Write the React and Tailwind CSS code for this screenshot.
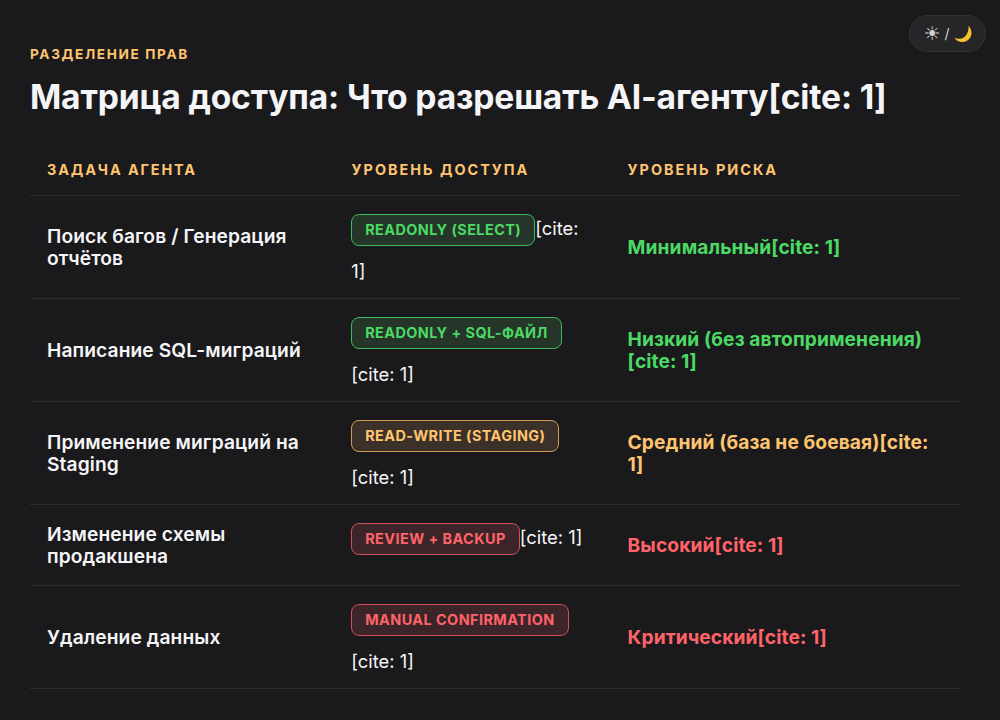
import React from 'react';

const rows = [
  {
    task: 'Поиск багов / Генерация отчётов',
    badge: 'READONLY (SELECT)',
    badgeClass: 'bg-[#25352a] border-[#3fb95c] text-[#4cd964]',
    risk: 'Минимальный[cite: 1]',
    riskClass: 'text-[#4cd964]',
  },
  {
    task: 'Написание SQL-миграций',
    badge: 'READONLY + SQL-ФАЙЛ',
    badgeClass: 'bg-[#25352a] border-[#3fb95c] text-[#4cd964]',
    risk: 'Низкий (без автоприменения)[cite: 1]',
    riskClass: 'text-[#4cd964]',
  },
  {
    task: 'Применение миграций на Staging',
    badge: 'READ-WRITE (STAGING)',
    badgeClass: 'bg-[#3b3128] border-[#cf9c58] text-[#ffc46f]',
    risk: 'Средний (база не боевая)[cite: 1]',
    riskClass: 'text-[#ffc46f]',
  },
  {
    task: 'Изменение схемы продакшена',
    badge: 'REVIEW + BACKUP',
    badgeClass: 'bg-[#3c2529] border-[#cf5157] text-[#ff6369]',
    risk: 'Высокий[cite: 1]',
    riskClass: 'text-[#ff6369]',
  },
  {
    task: 'Удаление данных',
    badge: 'MANUAL CONFIRMATION',
    badgeClass: 'bg-[#3c2529] border-[#cf5157] text-[#ff6369]',
    risk: 'Критический[cite: 1]',
    riskClass: 'text-[#ff6369]',
  },
];

const App = () => {
  return (
    <div className="min-h-[720px] bg-[#1a1a1c] px-[30px] pt-[46px] text-[#f5f5f7] font-['Inter',sans-serif] relative">
      {/* Theme toggle */}
      <button className="absolute top-[15px] right-[14px] w-[77px] h-[37px] flex items-center justify-center gap-[4px] rounded-full border border-[#333336] bg-[#262628] text-[14px] text-[#d0d0d2]">
        <span className="font-['DejaVu_Sans',sans-serif] text-[19px] leading-none">☀</span>
        <span>/</span>
        <svg className="w-[18px] h-[18px]" viewBox="0 0 18 18">
          <path d="M14.5 0.5 C18.5 5 18.5 11.5 14 15 C9.5 18.5 3.5 17.5 0.5 13 C4.5 14.5 9 14 11.5 11 C14 8 15 4 14.5 0.5 Z" fill="#f5c22e" />
        </svg>
      </button>

      <div className="text-[13.6px] leading-[17px] font-bold tracking-[1.65px] text-[#ffc46f]">РАЗДЕЛЕНИЕ ПРАВ</div>
      <h1 className="mt-[13px] text-[33.6px] leading-[42px] font-bold tracking-[-0.16px]">Матрица доступа: Что разрешать AI-агенту[cite: 1]</h1>

      <table className="mt-[29px] w-[930px] table-fixed border-collapse text-left">
        <colgroup>
          <col className="w-[304px]" />
          <col className="w-[276px]" />
          <col className="w-[350px]" />
        </colgroup>
        <thead>
          <tr className="border-b border-[#2c2c2e]">
            <th className="px-[17px] pt-[14px] pb-[16px] text-[14.4px] leading-[18px] font-bold tracking-[1.9px] text-[#ffc46f]">ЗАДАЧА АГЕНТА</th>
            <th className="px-[17.6px] pt-[14px] pb-[16px] text-[14.4px] leading-[18px] font-bold tracking-[2px] text-[#ffc46f]">УРОВЕНЬ ДОСТУПА</th>
            <th className="px-[17.6px] pt-[14px] pb-[16px] text-[14.4px] leading-[18px] font-bold tracking-[2px] text-[#ffc46f]">УРОВЕНЬ РИСКА</th>
          </tr>
        </thead>
        <tbody>
          {rows.map((row) => (
            <tr key={row.badge} className="border-b border-[#2c2c2e]">
              <td className="px-[17px] py-[16px] text-[19.2px] leading-[22px] font-semibold tracking-[0.1px]">{row.task}</td>
              <td className="px-[17.2px] py-[16px] text-[18.4px] leading-[22px]">
                <span className={`inline-block rounded-[8px] border px-[13px] py-[6px] mt-[2px] mb-[14px] text-[14.4px] leading-[18px] font-bold tracking-[0.45px] ${row.badgeClass}`}>
                  {row.badge}
                </span>
                [cite: 1]
              </td>
              <td className={`px-[17.6px] py-[16px] text-[19.2px] leading-[22px] font-bold tracking-[0.08px] ${row.riskClass}`}>{row.risk}</td>
            </tr>
          ))}
        </tbody>
      </table>
    </div>
  );
};

export default App;
